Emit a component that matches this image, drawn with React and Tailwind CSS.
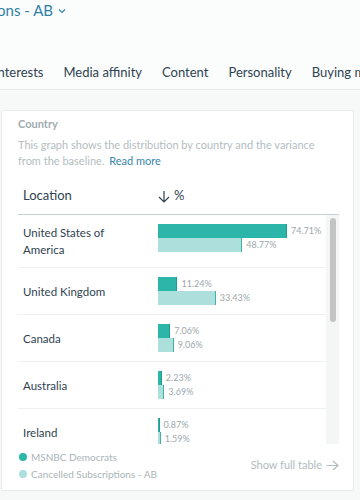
import React from "react";

const rows = [
  { name: "United States of America", a: 74.71, b: 48.77 },
  { name: "United Kingdom", a: 11.24, b: 33.43 },
  { name: "Canada", a: 7.06, b: 9.06 },
  { name: "Australia", a: 2.23, b: 3.69 },
  { name: "Ireland", a: 0.87, b: 1.59 },
];

const SCALE = 1.727;

function Bar({ value, dark }) {
  const w = Math.max(1, value * SCALE);
  return (
    <div className="flex items-center h-[14px]">
      <div
        className={
          dark
            ? "h-[14px] bg-[#2bb6a9] border-r border-[#1f9c90]"
            : "h-[14px] bg-[#ade0dc] border-r border-[#3fb1a6]"
        }
        style={{ width: w }}
      />
      <span className="ml-[4px] text-[9px] text-[#9ea8ac]">{value.toFixed(2)}%</span>
    </div>
  );
}

const App = () => {
  return (
    <div className="w-[360px] h-[500px] overflow-hidden bg-[#f7f9f9] font-['Lato',sans-serif]">
      {/* Top header */}
      <div className="bg-[#fbfcfc] h-[90px] border-b border-[#e5e9ea] overflow-hidden">
        <div className="flex items-center h-[20px] whitespace-nowrap -ml-[136px] text-[15px] text-[#2f80a8]">
          Cancelled Subscriptions - AB
          <svg className="ml-[5px] mt-[1px]" width="8" height="6" viewBox="0 0 8 6" fill="none">
            <path d="M1 1.5l3 3 3-3" stroke="#2f80a8" strokeWidth="1.1" />
          </svg>
        </div>
        <div className="flex items-center h-[34px] mt-[36px] gap-[20px] whitespace-nowrap -ml-[6px] text-[13px] text-[#2e4351]">
          <span>Interests</span>
          <span>Media affinity</span>
          <span>Content</span>
          <span>Personality</span>
          <span>Buying motivations</span>
        </div>
      </div>

      {/* Card */}
      <div className="mt-[20px] ml-[1px] w-[353px] h-[381px] bg-white border border-[#e8ecec] rounded-[2px] flex flex-col">
        <div className="pl-[16px] pt-[6px]">
          <div className="text-[11px] leading-[14px] font-bold text-[#a2abaf]">Country</div>
          <p className="mt-[6px] text-[11px] leading-[16px] text-[#b5bdc0] pr-[30px]">
            This graph shows the distribution by country and the variance from the baseline.{" "}
            <span className="ml-[2px] text-[#3885ad]">Read more</span>
          </p>
        </div>

        <div className="ml-[16px] w-[321px]">
          {/* Table header */}
          <div className="mt-[9px] h-[37px] flex items-center border-b border-[#c9d0d3] text-[13px] text-[#2e4351]">
            <div className="w-[140px] pl-[5px]">Location</div>
            <div className="flex items-center">
              <svg width="12" height="13" viewBox="0 0 12 13" fill="none">
                <path d="M6 1v11M1 7l5 5 5-5" stroke="#2e4351" strokeWidth="1.2" />
              </svg>
              <span className="ml-[4px]">%</span>
            </div>
          </div>

          {/* Table body */}
          <div className="h-[229px] overflow-hidden flex">
            <div className="w-[308px]">
              {rows.map((r) => (
                <div key={r.name} className="flex border-b border-[#eef0f1] py-[9px]">
                  <div className="w-[140px] pl-[5px] pr-[32px] self-center text-[11.5px] leading-[17px] text-[#2e4351]">
                    {r.name}
                  </div>
                  <div className="flex-1">
                    <Bar value={r.a} dark />
                    <Bar value={r.b} />
                  </div>
                </div>
              ))}
            </div>
            <div className="w-[13px] bg-[#f4f5f5] pt-[3px] pl-[4px]">
              <div className="w-[6px] h-[104px] rounded-full bg-[#c3c3c3]" />
            </div>
          </div>
        </div>

        {/* Legend + link */}
        <div className="flex items-center pl-[17px] pr-[14px] pt-[7px]">
          <div className="flex flex-col gap-[5px] text-[10px] leading-[12px] text-[#abb4b7]">
            <div className="flex items-center">
              <span className="w-[8px] h-[8px] rounded-full bg-[#2bb6a9]" />
              <span className="ml-[4px]">MSNBC Democrats</span>
            </div>
            <div className="flex items-center">
              <span className="w-[8px] h-[8px] rounded-full bg-[#ade0dc]" />
              <span className="ml-[4px]">Cancelled Subscriptions - AB</span>
            </div>
          </div>
          <div className="ml-auto flex items-center text-[11px] text-[#b3bbbe]">
            Show full table
            <svg className="ml-[4px]" width="13" height="11" viewBox="0 0 13 11" fill="none">
              <path d="M0.5 5.5h11.5M7 1l5 4.5-5 4.5" stroke="#b3bbbe" strokeWidth="1.2" />
            </svg>
          </div>
        </div>
      </div>
    </div>
  );
};

export default App;
